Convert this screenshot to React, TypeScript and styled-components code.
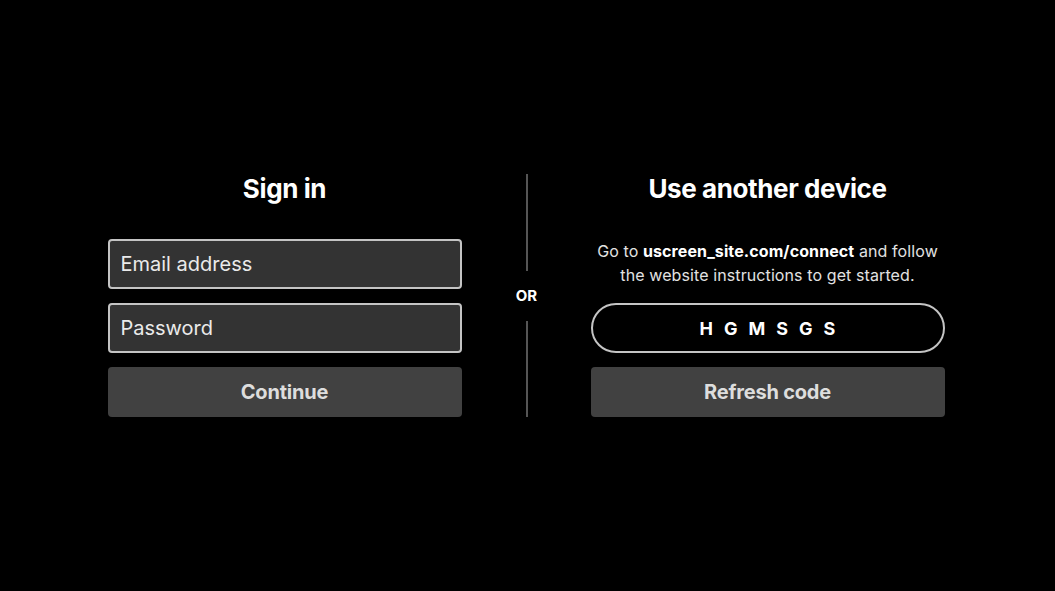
import styled, { createGlobalStyle } from 'styled-components';

const GlobalStyle = createGlobalStyle`
  html, body {
    margin: 0;
    padding: 0;
    background: #000;
  }
  body {
    font-family: Inter, "Noto Sans", sans-serif;
    -webkit-font-smoothing: antialiased;
  }
  * { box-sizing: border-box; }
`;

const Page = styled.div`
  width: 100vw;
  height: 100vh;
  background: #000;
  display: flex;
  align-items: center;
  justify-content: center;
  padding: 0 3px 1px 0;
`;

const Layout = styled.div`
  display: flex;
  gap: 63px;
  align-items: stretch;
`;

const Column = styled.div`
  width: 354px;
  display: flex;
  flex-direction: column;
  align-items: stretch;
`;

const Title = styled.h2`
  margin: 0 0 34px 0;
  font-size: 26px;
  line-height: 32px;
  font-weight: 700;
  letter-spacing: -0.4px;
  color: #fff;
  text-align: center;
`;

const Stack = styled.div<{ $top?: number }>`
  display: flex;
  flex-direction: column;
  gap: 14px;
  margin-top: ${({ $top }) => $top ?? 0}px;
`;

const Field = styled.input`
  height: 50px;
  width: 100%;
  padding: 0 11px;
  background: #333;
  border: 2px solid #c4c4c4;
  border-radius: 4px;
  font-family: Inter, sans-serif;
  font-size: 20px;
  color: #eee;
  outline: none;
  &::placeholder {
    color: #eaeaea;
  }
`;

const Button = styled.button`
  height: 50px;
  width: 100%;
  border: none;
  border-radius: 4px;
  background: #414141;
  color: #ddd;
  font-family: Inter, sans-serif;
  font-size: 20px;
  font-weight: 700;
  letter-spacing: -0.2px;
  cursor: pointer;
`;

const Info = styled.p`
  margin: 0;
  font-size: 16px;
  line-height: 24px;
  letter-spacing: 0.1px;
  color: #e2e2e2;
  text-align: center;
  b {
    color: #fff;
    font-weight: 700;
  }
`;

const CodePill = styled.div`
  height: 50px;
  border: 2px solid #c4c4c4;
  border-radius: 25px;
  background: #000;
  display: flex;
  align-items: center;
  justify-content: center;
  padding-left: 11px;
  color: #fff;
  font-size: 18px;
  font-weight: 700;
  letter-spacing: 11px;
`;

const Divider = styled.div`
  width: 2px;
  margin-left: 1px;
  display: flex;
  flex-direction: column;
  align-items: center;
  gap: 16px;
  padding-top: 1px;
`;

const Line = styled.div`
  flex: 1;
  width: 2px;
  background: #555;
`;

const Or = styled.span`
  font-size: 15px;
  font-weight: 700;
  color: #fff;
  line-height: 18px;
`;

export default function App() {
  return (
    <>
      <GlobalStyle />
      <Page>
        <Layout>
          <Column>
            <Title>Sign in</Title>
            <Stack>
              <Field type="email" placeholder="Email address" />
              <Field type="password" placeholder="Password" />
              <Button>Continue</Button>
            </Stack>
          </Column>
          <Divider>
            <Line />
            <Or>OR</Or>
            <Line />
          </Divider>
          <Column>
            <Title>Use another device</Title>
            <Info>
              Go to <b>uscreen_site.com/connect</b> and follow the website instructions to get started.
            </Info>
            <Stack $top={16}>
              <CodePill>HGMSGS</CodePill>
              <Button>Refresh code</Button>
            </Stack>
          </Column>
        </Layout>
      </Page>
    </>
  );
}
